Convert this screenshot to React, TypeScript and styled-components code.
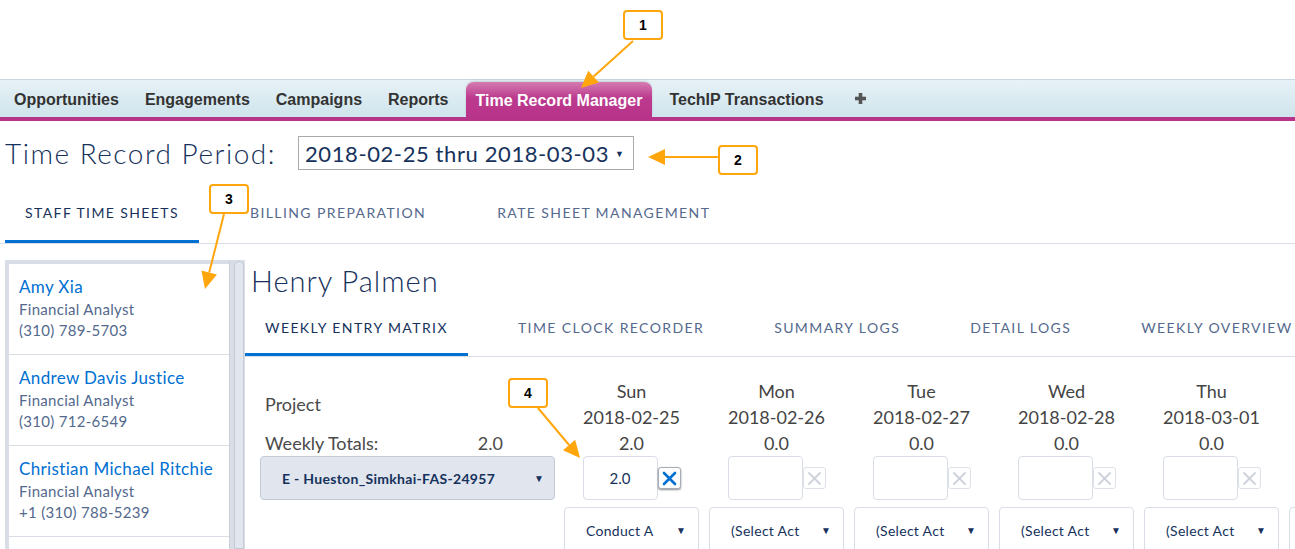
import React from 'react';
import styled, { createGlobalStyle } from 'styled-components';

const Global = createGlobalStyle`
  html, body { margin: 0; padding: 0; background: #fff; }
  body { width: 1295px; height: 549px; overflow: hidden; font-family: Lato, "Open Sans", sans-serif; }
  * { box-sizing: border-box; }
`;

const Page = styled.div`
  position: relative;
  width: 1295px;
  height: 549px;
  overflow: hidden;
  display: flex;
  flex-direction: column;
`;

const TopSpace = styled.div`
  flex: none;
  height: 79px;
`;

const NavBar = styled.nav`
  flex: none;
  height: 42px;
  display: flex;
  align-items: flex-end;
  padding-left: 1px;
  border-top: 1px solid #c6d7de;
  border-bottom: 4px solid #b8338a;
  background: linear-gradient(#e7f2f7, #cfe4ec);
  font-family: "Liberation Sans", Arial, sans-serif;
`;

const NavTab = styled.div<{ $active?: boolean }>`
  display: flex;
  align-items: center;
  height: ${p => (p.$active ? '35px' : '37px')};
  padding: ${p => (p.$active ? '2px 10px 0' : '2px 13px 0')};
  margin: 0 ${p => (p.$active ? '4px' : '0')};
  font-size: 16px;
  font-weight: bold;
  color: ${p => (p.$active ? '#fff' : '#333')};
  white-space: nowrap;
  border-radius: ${p => (p.$active ? '8px 8px 0 0' : '0')};
  background: ${p => (p.$active ? 'linear-gradient(#d57cb2, #bc3b8e 45%, #b8338a)' : 'transparent')};
  box-shadow: ${p => (p.$active ? '0 -1px 2px rgba(0,0,0,0.15)' : 'none')};
`;

const PlusTab = styled.div`
  display: flex;
  align-items: center;
  height: 37px;
  padding: 0 18px;
`;

const PeriodRow = styled.div`
  flex: none;
  margin-top: 15px;
  height: 34px;
  display: flex;
  align-items: center;
  gap: 22px;
  padding-left: 5px;
`;

const PeriodTitle = styled.h1`
  margin: 0;
  font-family: Lato, sans-serif;
  font-weight: 300;
  font-size: 28px;
  letter-spacing: 1.5px;
  color: #16325c;
  white-space: nowrap;
`;

const PeriodSelect = styled.div`
  width: 336px;
  height: 34px;
  border: 1px solid #a9a9a9;
  padding: 0 9px 0 6px;
  display: flex;
  align-items: center;
  justify-content: space-between;
  font-size: 22px;
  letter-spacing: 0.6px;
  color: #16325c;
`;

const SmallCaret = styled.span<{ $size?: number }>`
  flex: none;
  font-size: ${p => p.$size ?? 9}px;
  color: #16325c;
  line-height: 1;
  letter-spacing: 0;
`;

const MainTabs = styled.div`
  flex: none;
  margin-top: 15px;
  height: 59px;
  display: flex;
  gap: 31px;
  padding-left: 5px;
  border-bottom: 1px solid #d8dde6;
`;

const Tab = styled.div<{ $active?: boolean; $h: number }>`
  height: ${p => p.$h}px;
  padding: 0 20px;
  display: flex;
  align-items: center;
  font-size: 14px;
  letter-spacing: 1.4px;
  text-transform: uppercase;
  white-space: nowrap;
  color: ${p => (p.$active ? '#16325c' : '#54698d')};
  border-bottom: 3px solid ${p => (p.$active ? '#0070d2' : 'transparent')};
`;

const Body = styled.div`
  flex: 1;
  min-height: 0;
  margin-top: 16px;
  display: flex;
`;

const Sidebar = styled.aside`
  flex: none;
  width: 240px;
  margin-left: 5px;
  padding: 4px 0 0 4px;
  background: #d8dde6;
  display: flex;
`;

const StaffList = styled.div`
  width: 220px;
  background: #fff;
`;

const StaffItem = styled.div`
  padding: 11px 0 13px 10px;
  border-bottom: 1px solid #d8dde6;
`;

const StaffName = styled.div`
  font-size: 17px;
  letter-spacing: 0.35px;
  line-height: 24px;
  color: #0070d2;
  white-space: nowrap;
`;

const StaffMeta = styled.div`
  font-size: 15px;
  letter-spacing: 0.3px;
  line-height: 21px;
  color: #54698d;
`;

const ScrollTrack = styled.div`
  flex: 1;
  padding: 0 1px 0 4px;
  margin-top: -3px;
  border-left: 1px solid #c9d0da;
`;

const ScrollThumb = styled.div`
  height: 100%;
  border-radius: 6px 6px 0 0;
  background: #e2e6ee;
  border: 1px solid #c3cad5;
`;

const Content = styled.main`
  flex: 1;
  min-width: 0;
  overflow: hidden;
  display: flex;
  flex-direction: column;
`;

const PersonName = styled.h2`
  margin: 1px 0 0;
  padding-left: 6px;
  font-weight: 300;
  font-size: 29px;
  letter-spacing: 1px;
  line-height: 40px;
  color: #16325c;
  white-space: nowrap;
`;

const SubTabs = styled.div`
  flex: none;
  height: 56px;
  display: flex;
  gap: 30px;
  border-bottom: 1px solid #d8dde6;
`;

const Matrix = styled.div`
  display: flex;
  gap: 10px;
  padding: 21px 0 0 15px;
`;

const LabelCol = styled.div`
  flex: none;
  width: 294px;
  display: flex;
  flex-direction: column;
`;

const Label = styled.div<{ $h: number }>`
  height: ${p => p.$h}px;
  display: flex;
  align-items: center;
  justify-content: space-between;
  padding: 0 51px 0 5px;
  font-size: 18px;
  color: #4a4a4a;
`;

const ProjectSelect = styled.div`
  width: 295px;
  height: 44px;
  display: flex;
  align-items: center;
  justify-content: space-between;
  padding: 0 10px 0 21px;
  background: #e0e5ee;
  border: 1px solid #c3cad6;
  border-radius: 4px;
  font-size: 14px;
  letter-spacing: 0.3px;
  font-weight: bold;
  color: #16325c;
  white-space: nowrap;
`;

const DayCol = styled.div`
  flex: none;
  width: 135px;
  display: flex;
  flex-direction: column;
  align-items: stretch;
`;

const DayLine = styled.div`
  height: 26px;
  line-height: 26px;
  text-align: center;
  font-size: 18px;
  color: #444;
  white-space: nowrap;
`;

const EntryRow = styled.div`
  height: 44px;
  display: flex;
  align-items: center;
  justify-content: center;
`;

const HoursInput = styled.div`
  width: 75px;
  height: 44px;
  border: 1px solid #d8dde6;
  border-radius: 4px;
  display: flex;
  align-items: center;
  justify-content: center;
  font-size: 15px;
  color: #16325c;
`;

const ClearBtn = styled.div<{ $on?: boolean }>`
  width: 23px;
  height: 22px;
  display: flex;
  align-items: center;
  justify-content: center;
  border-radius: 3px;
  background: #fff;
  border: 1px solid ${p => (p.$on ? '#a7adb6' : '#dde1e8')};
  box-shadow: ${p => (p.$on ? '0 1px 2px rgba(0,0,0,0.45)' : 'none')};
`;

const ActivitySelect = styled.div`
  margin-top: 7px;
  height: 46px;
  display: flex;
  align-items: center;
  justify-content: space-between;
  padding: 0 12px 0 21px;
  border: 1px solid #d8dde6;
  border-radius: 4px;
  font-size: 14px;
  letter-spacing: 0.3px;
  color: #16325c;
`;

const ActivityText = styled.span`
  width: 72px;
  overflow: hidden;
  white-space: nowrap;
`;

const Callout = styled.div<{ $x: number; $y: number }>`
  position: absolute;
  left: ${p => p.$x}px;
  top: ${p => p.$y}px;
  width: 40px;
  height: 30px;
  border: 2px solid #ffa60d;
  border-radius: 4px;
  background: #fff;
  display: flex;
  align-items: center;
  justify-content: center;
  font-family: "Liberation Sans", Arial, sans-serif;
  font-weight: bold;
  font-size: 14px;
  color: #000;
`;

const Overlay = styled.svg`
  position: absolute;
  left: 0;
  top: 0;
  pointer-events: none;
`;

const XIcon = ({ on }: { on?: boolean }) => (
  <svg width="15" height="15" viewBox="0 0 15 15">
    <path d="M2 2 L13 13 M13 2 L2 13" stroke={on ? '#0070d2' : '#cdd2da'} strokeWidth={on ? 2.6 : 1.8} strokeLinecap="round" />
  </svg>
);

const PlusIcon = () => (
  <svg width="11" height="11" viewBox="0 0 11 11">
    <rect x="3.7" y="0" width="3.6" height="11" fill="#555" />
    <rect x="0" y="3.7" width="11" height="3.6" fill="#555" />
  </svg>
);

const Arrow = ({ x1, y1, x2, y2 }: { x1: number; y1: number; x2: number; y2: number }) => {
  const dx = x2 - x1;
  const dy = y2 - y1;
  const len = Math.hypot(dx, dy);
  const ux = dx / len;
  const uy = dy / len;
  const hl = 17;
  const hw = 8;
  const bx = x2 - ux * hl;
  const by = y2 - uy * hl;
  const pts = `${x2},${y2} ${bx - uy * hw},${by + ux * hw} ${bx + uy * hw},${by - ux * hw}`;
  return (
    <g>
      <line x1={x1} y1={y1} x2={bx} y2={by} stroke="#ffa60d" strokeWidth="2" />
      <polygon points={pts} fill="#ffa60d" />
    </g>
  );
};

const navTabs = ['Opportunities', 'Engagements', 'Campaigns', 'Reports'];
const staff = [
  { name: 'Amy Xia', title: 'Financial Analyst', phone: '(310) 789-5703' },
  { name: 'Andrew Davis Justice', title: 'Financial Analyst', phone: '(310) 712-6549' },
  { name: 'Christian Michael Ritchie', title: 'Financial Analyst', phone: '+1 (310) 788-5239' },
];
const days = [
  { d: 'Sun', date: '2018-02-25', total: '2.0', hours: '2.0', act: 'Conduct A' },
  { d: 'Mon', date: '2018-02-26', total: '0.0', hours: '', act: '(Select Act' },
  { d: 'Tue', date: '2018-02-27', total: '0.0', hours: '', act: '(Select Act' },
  { d: 'Wed', date: '2018-02-28', total: '0.0', hours: '', act: '(Select Act' },
  { d: 'Thu', date: '2018-03-01', total: '0.0', hours: '', act: '(Select Act' },
  { d: 'Fri', date: '2018-03-02', total: '0.0', hours: '', act: '(Select Act' },
];

export default function App() {
  return (
    <Page>
      <Global />
      <TopSpace />
      <NavBar>
        {navTabs.map(t => (
          <NavTab key={t}>{t}</NavTab>
        ))}
        <NavTab $active>Time Record Manager</NavTab>
        <NavTab>TechIP Transactions</NavTab>
        <PlusTab>
          <PlusIcon />
        </PlusTab>
      </NavBar>

      <PeriodRow>
        <PeriodTitle>Time Record Period:</PeriodTitle>
        <PeriodSelect>
          <span>2018-02-25 thru 2018-03-03</span>
          <SmallCaret>▼</SmallCaret>
        </PeriodSelect>
      </PeriodRow>

      <MainTabs>
        <Tab $h={58} $active>Staff Time Sheets</Tab>
        <Tab $h={58}>Billing Preparation</Tab>
        <Tab $h={58}>Rate Sheet Management</Tab>
      </MainTabs>

      <Body>
        <Sidebar>
          <StaffList>
            {staff.map(s => (
              <StaffItem key={s.name}>
                <StaffName>{s.name}</StaffName>
                <StaffMeta>{s.title}</StaffMeta>
                <StaffMeta>{s.phone}</StaffMeta>
              </StaffItem>
            ))}
          </StaffList>
          <ScrollTrack>
            <ScrollThumb />
          </ScrollTrack>
        </Sidebar>

        <Content>
          <PersonName>Henry Palmen</PersonName>
          <SubTabs>
            <Tab $h={55} $active>Weekly Entry Matrix</Tab>
            <Tab $h={55}>Time Clock Recorder</Tab>
            <Tab $h={55}>Summary Logs</Tab>
            <Tab $h={55}>Detail Logs</Tab>
            <Tab $h={55}>Weekly Overview</Tab>
          </SubTabs>
          <Matrix>
            <LabelCol>
              <Label $h={52}>Project</Label>
              <Label $h={26}>
                <span>Weekly Totals:</span>
                <span>2.0</span>
              </Label>
              <ProjectSelect>
                <span>E - Hueston_Simkhai-FAS-24957</span>
                <SmallCaret $size={10}>▼</SmallCaret>
              </ProjectSelect>
            </LabelCol>
            {days.map((day, i) => (
              <DayCol key={day.d}>
                <DayLine>{day.d}</DayLine>
                <DayLine>{day.date}</DayLine>
                <DayLine>{day.total}</DayLine>
                <EntryRow>
                  <HoursInput>{day.hours}</HoursInput>
                  <ClearBtn $on={i === 0}>
                    <XIcon on={i === 0} />
                  </ClearBtn>
                </EntryRow>
                <ActivitySelect>
                  <ActivityText>{day.act}</ActivityText>
                  <SmallCaret $size={10}>▼</SmallCaret>
                </ActivitySelect>
              </DayCol>
            ))}
          </Matrix>
        </Content>
      </Body>

      <Overlay width="1295" height="549">
        <Arrow x1={633} y1={41} x2={581} y2={88} />
        <Arrow x1={718} y1={157} x2={648} y2={157} />
        <Arrow x1={224} y1={214} x2={205} y2={289} />
        <Arrow x1={538} y1={408} x2={580} y2={458} />
      </Overlay>
      <Callout $x={623} $y={10}>1</Callout>
      <Callout $x={718} $y={145}>2</Callout>
      <Callout $x={209} $y={184}>3</Callout>
      <Callout $x={508} $y={378}>4</Callout>
    </Page>
  );
}
